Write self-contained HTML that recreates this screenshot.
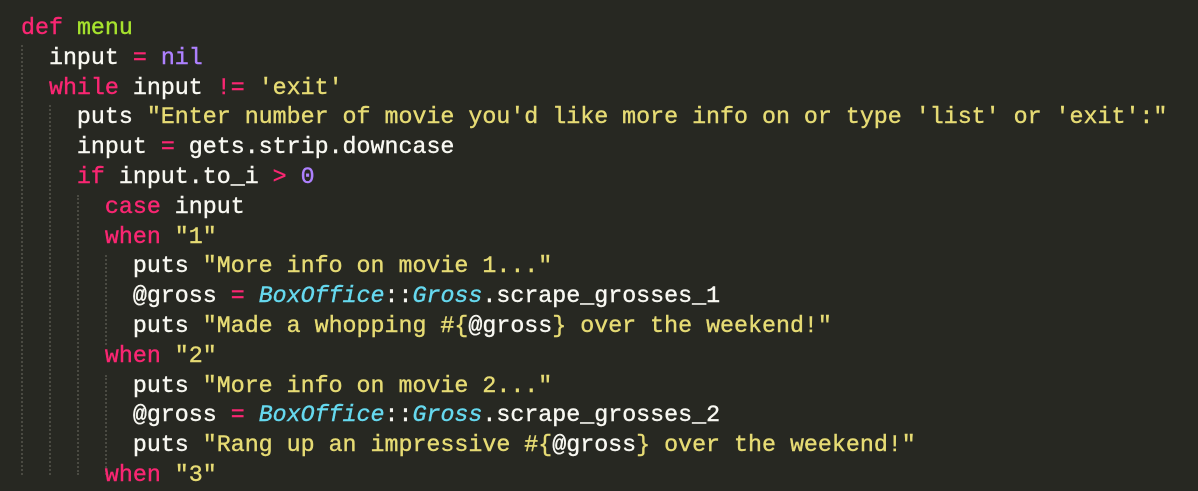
<!DOCTYPE html>
<html><head><style>
html,body{margin:0;padding:0;background:#272822;width:1198px;height:470px;overflow:hidden}
pre{margin:0;position:absolute;left:21px;top:14px;font-family:"Liberation Mono",monospace;font-size:23.3px;line-height:29.8px;color:#f8f8f2;white-space:pre;-webkit-text-stroke:0.4px currentColor}
.k{color:#f92672}.f{color:#a6e22e}.c{color:#ae81ff}.s{color:#e6db74}.t{color:#66d9ef;font-style:italic}
.g{position:absolute;width:0;border-left:2px dotted #4a4a42}
</style></head><body>
<div class="g" style="left:21px;top:45px;height:430px"></div>
<div class="g" style="left:49px;top:105px;height:370px"></div>
<div class="g" style="left:77px;top:195px;height:280px"></div>
<div class="g" style="left:105px;top:255px;height:90px"></div>
<div class="g" style="left:105px;top:375px;height:100px"></div>
<pre><span class="k">def</span> <span class="f">menu</span>
  input <span class="k">=</span> <span class="c">nil</span>
  <span class="k">while</span> input <span class="k">!=</span> <span class="s">'exit'</span>
    puts <span class="s">"Enter number of movie you'd like more info on or type 'list' or 'exit':"</span>
    input <span class="k">=</span> gets.strip.downcase
    <span class="k">if</span> input.to_i <span class="k">&gt;</span> <span class="c">0</span>
      <span class="k">case</span> input
      <span class="k">when</span> <span class="s">"1"</span>
        puts <span class="s">"More info on movie 1..."</span>
        @gross <span class="k">=</span> <span class="t">BoxOffice</span>::<span class="t">Gross</span>.scrape_grosses_1
        puts <span class="s">"Made a whopping #{</span>@gross<span class="s">} over the weekend!"</span>
      <span class="k">when</span> <span class="s">"2"</span>
        puts <span class="s">"More info on movie 2..."</span>
        @gross <span class="k">=</span> <span class="t">BoxOffice</span>::<span class="t">Gross</span>.scrape_grosses_2
        puts <span class="s">"Rang up an impressive #{</span>@gross<span class="s">} over the weekend!"</span>
      <span class="k">when</span> <span class="s">"3"</span>
</pre>
</body></html>
